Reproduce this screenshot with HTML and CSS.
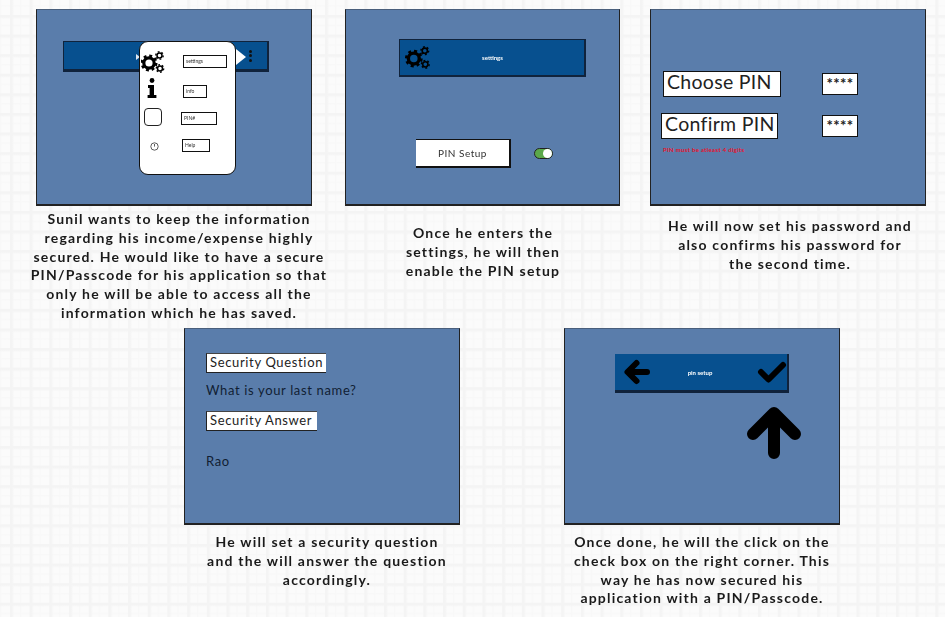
FILE: index.html
```html
<!DOCTYPE html>
<html lang="en">
<head>
    <meta charset="UTF-8">
    <meta name="viewport" content="width=device-width, initial-scale=1.0">
    <title>PIN Setup Storyboard</title>
    <link rel="stylesheet" href="styles.css">
</head>
<body>
    <svg class="defs" width="0" height="0" aria-hidden="true">
        <symbol id="gears" viewBox="0 0 24 22">
            <circle cx="8" cy="12" r="5.2" fill="none" stroke="#000" stroke-width="3.2"/>
            <circle cx="8" cy="12" r="7" fill="none" stroke="#000" stroke-width="3" stroke-dasharray="2.8 2.7"/>
            <circle cx="18.5" cy="4.5" r="2.5" fill="none" stroke="#000" stroke-width="1.5"/>
            <circle cx="18.5" cy="4.5" r="3.7" fill="none" stroke="#000" stroke-width="1.4" stroke-dasharray="1.8 2"/>
            <circle cx="19" cy="17.5" r="2.5" fill="none" stroke="#000" stroke-width="1.5"/>
            <circle cx="19" cy="17.5" r="3.7" fill="none" stroke="#000" stroke-width="1.4" stroke-dasharray="1.8 2"/>
        </symbol>
    </svg>

    <div class="board">
        <div class="row row-top">
            <section class="step">
                <div class="panel panel-menu">
                    <div class="toolbar toolbar-menu">
                        <span class="kebab"><i></i><i></i><i></i></span>
                    </div>
                    <div class="popup">
                        <div class="popup-row">
                            <svg class="gears" width="24" height="22"><use href="#gears"/></svg>
                            <span class="tag tag-settings">settings</span>
                        </div>
                        <div class="popup-row">
                            <svg class="info" width="10" height="20" viewBox="0 0 10 20">
                                <circle cx="5" cy="2.5" r="2.4"/>
                                <path d="M1 7h6v10h2.4v3H.6v-3H2.6v-7H1z"/>
                            </svg>
                            <span class="tag tag-info">info</span>
                        </div>
                        <div class="popup-row">
                            <span class="blank-icon"></span>
                            <span class="tag tag-pin">PIN#</span>
                        </div>
                        <div class="popup-row">
                            <svg class="clock" width="9" height="9" viewBox="0 0 9 9">
                                <circle cx="4.5" cy="4.5" r="3.7" fill="none" stroke="#333" stroke-width=".8"/>
                                <path d="M4.5 2v2.6" stroke="#333" stroke-width=".8"/>
                            </svg>
                            <span class="tag tag-help">Help</span>
                        </div>
                    </div>
                </div>
                <p class="caption caption-one">Sunil wants to keep the information<br>regarding his income/expense highly<br>secured. He would like to have a secure<br>PIN/Passcode for his application so that<br>only he will be able to access all the<br>information which he has saved.</p>
            </section>

            <section class="step">
                <div class="panel panel-settings">
                    <div class="toolbar toolbar-settings">
                        <svg class="gears" width="26" height="23"><use href="#gears"/></svg>
                        <span class="toolbar-title">settings</span>
                    </div>
                    <div class="pin-row">
                        <button class="pin-btn">PIN Setup</button>
                        <span class="toggle"><i></i></span>
                    </div>
                </div>
                <p class="caption caption-two">Once he enters the<br>settings, he will then<br>enable the PIN setup</p>
            </section>

            <section class="step">
                <div class="panel panel-pin">
                    <div class="pin-form">
                        <span class="label-big">Choose PIN</span>
                        <span class="stars">****</span>
                        <span class="label-big label-confirm">Confirm PIN</span>
                        <span class="stars">****</span>
                    </div>
                    <p class="pin-error">PIN must be atleast 4 digits</p>
                </div>
                <p class="caption caption-three">He will now set his password and<br>also confirms his password for<br>the second time.</p>
            </section>
        </div>

        <div class="row row-bottom">
            <section class="step">
                <div class="panel panel-security">
                    <span class="label-small label-question">Security Question</span>
                    <p class="plain">What is your last name?</p>
                    <span class="label-small label-answer">Security Answer</span>
                    <p class="plain plain-answer">Rao</p>
                </div>
                <p class="caption caption-four">He will set a security question<br>and the will answer the question<br>accordingly.</p>
            </section>

            <section class="step">
                <div class="panel panel-done">
                    <div class="toolbar toolbar-done">
                        <svg width="28" height="28" viewBox="0 0 28 28">
                            <path d="M24 14H5M13.5 5 4.5 14l9 9" fill="none" stroke="#000" stroke-width="6" stroke-linecap="round" stroke-linejoin="round"/>
                        </svg>
                        <span class="toolbar-title">pin setup</span>
                        <svg width="30" height="24" viewBox="0 0 30 24">
                            <path d="M4 12l7.5 7.5L26 5" fill="none" stroke="#000" stroke-width="6" stroke-linecap="round" stroke-linejoin="round"/>
                        </svg>
                    </div>
                    <svg class="up-arrow" width="56" height="52" viewBox="0 0 56 52">
                        <path d="M28 46V7M7 27 28 6l21 21" fill="none" stroke="#000" stroke-width="12" stroke-linecap="round" stroke-linejoin="round"/>
                    </svg>
                </div>
                <p class="caption caption-five">Once done, he will the click on the<br>check box on the right corner. This<br>way he has now secured his<br>application with a PIN/Passcode.</p>
            </section>
        </div>
    </div>
</body>
</html>
```

FILE: styles.css
```css
* {
    margin: 0;
    padding: 0;
    box-sizing: border-box;
}

body {
    width: 945px;
    height: 617px;
    overflow: hidden;
    font-family: 'Lato', 'Open Sans', sans-serif;
    color: #222;
    background-color: #fbfbfb;
    background-image:
        linear-gradient(90deg, #f4f4f4 2px, transparent 4px),
        linear-gradient(#f4f4f4 2px, transparent 4px),
        linear-gradient(90deg, #f8f8f8 1px, transparent 2px),
        linear-gradient(#f8f8f8 1px, transparent 2px);
    background-size: 19.7px 19.6px, 19.7px 19.6px, 9.85px 9.8px, 9.85px 9.8px;
    background-position: 10px 0, 0 15px, 10px 0, 0 15px;
}

.defs {
    position: absolute;
}

.board {
    height: 617px;
    padding-top: 9px;
    filter: blur(0.45px);
}

.row {
    display: flex;
}

.row-top {
    height: 319px;
    padding-left: 36px;
    gap: 33px;
}

.row-top .step + .step + .step {
    margin-left: -4px;
}

.row-bottom {
    padding-left: 184px;
    gap: 104px;
}

.step {
    width: 276px;
}

/* panels */

.panel {
    position: relative;
    height: 197px;
    background-color: #5a7dab;
    border: 1px solid #222;
    border-top-color: #4a5f7c;
    border-bottom-width: 2px;
}

.panel-settings {
    width: 275px;
}

.caption {
    width: 300px;
    font-size: 14px;
    line-height: 18.8px;
    font-weight: 700;
    letter-spacing: 1.2px;
    text-align: center;
    white-space: nowrap;
    color: #1a1a1a;
}

.caption-one {
    margin: 4px 0 0 -7px;
}

.caption-two {
    margin: 18px 0 0 -12px;
}

.caption-three {
    margin: 11px 0 0 -10px;
}

.caption-four {
    margin: 8px 0 0 -7px;
}

.caption-five {
    margin: 8px 0 0 -12px;
}

/* toolbars */

.toolbar {
    display: flex;
    align-items: center;
    background-color: #07508f;
    border: 1px solid #10233c;
    border-right-width: 2px;
    border-bottom-width: 2px;
}

.toolbar-title {
    flex: 1;
    color: #fff;
    font-size: 6px;
    font-weight: 700;
    text-align: center;
}

.toolbar-menu {
    position: relative;
    width: 206px;
    height: 31px;
    margin: 31px 0 0 26px;
    justify-content: flex-end;
    padding-right: 15px;
    border-bottom-width: 3px;
}

.toolbar-menu::before {
    content: "";
    position: absolute;
    left: 72px;
    top: 12px;
    border-left: 4px solid #dfe8f2;
    border-top: 3px solid transparent;
    border-bottom: 3px solid transparent;
}

.kebab {
    display: flex;
    flex-direction: column;
    gap: 1.5px;
}

.kebab i {
    width: 3px;
    height: 3px;
    border-radius: 50%;
    background-color: #111;
}

.toolbar-settings {
    width: 187px;
    height: 38px;
    margin: 29px 0 0 53px;
    padding-left: 5px;
}

.toolbar-settings .toolbar-title {
    padding-right: 30px;
}

.toolbar-done {
    width: 174px;
    height: 39px;
    margin: 25px 0 0 50px;
    padding: 0 0 0 8px;
    border-width: 0 2px 3px 0;
}

.toolbar-done .toolbar-title {
    padding-right: 8px;
}

.up-arrow {
    display: block;
    margin: 14px 0 0 181px;
}

/* popup menu over the toolbar in the first panel */

.popup {
    position: absolute;
    left: 102px;
    top: 31px;
    width: 97px;
    height: 134px;
    padding: 5px 0 0 1px;
    display: flex;
    flex-direction: column;
    background-color: #fff;
    border: 1px solid #111;
    border-radius: 9px;
}

.popup::after {
    content: "";
    position: absolute;
    right: -11px;
    top: 7px;
    border-left: 10px solid #fff;
    border-top: 8px solid transparent;
    border-bottom: 8px solid transparent;
}

.popup-row {
    display: grid;
    grid-template-columns: 42px auto;
    align-items: center;
    justify-items: start;
    justify-content: start;
    height: 29px;
}

.popup-row:nth-child(2) {
    height: 30px;
}

.popup-row:nth-child(3) {
    height: 25px;
}

.popup-row:nth-child(4) {
    height: 28px;
}

.tag {
    height: 13px;
    padding-left: 2px;
    border: 1px solid #111;
    font-size: 5px;
    line-height: 11px;
    color: #333;
}

.tag-settings {
    width: 44px;
}

.tag-info {
    width: 24px;
}

.tag-pin {
    width: 36px;
    margin-left: -2px;
}

.tag-help {
    width: 28px;
    margin-left: -1px;
}

.info {
    margin: -6px 0 0 6px;
}

.blank-icon {
    width: 18px;
    height: 18px;
    margin: -3px 0 0 3px;
    border: 1.5px solid #222;
    border-radius: 4px;
}

.clock {
    margin: 3px 0 0 9px;
}

/* settings panel */

.pin-row {
    display: flex;
    align-items: center;
    gap: 23px;
    margin: 62px 0 0 70px;
}

.pin-btn {
    width: 95px;
    height: 29px;
    background-color: #fff;
    border: none;
    border-right: 2px solid #111;
    border-bottom: 2px solid #111;
    border-top: 1px solid #111;
    font-family: inherit;
    font-size: 10px;
    letter-spacing: 0.5px;
    color: #333;
}

.toggle {
    display: flex;
    justify-content: flex-end;
    align-items: center;
    width: 19px;
    height: 11px;
    background-color: #5ba84a;
    border: 1.5px solid #222;
    border-radius: 6px;
}

.toggle i {
    width: 9px;
    height: 9px;
    background-color: #fff;
    border-radius: 50%;
}

/* choose pin panel */

.pin-form {
    display: grid;
    grid-template-columns: 159px auto;
    grid-template-rows: 26px 25px;
    row-gap: 16px;
    align-items: start;
    margin: 61px 0 0 12px;
}

.label-big {
    width: 118px;
    height: 26px;
    background-color: #fff;
    border: 1px solid #111;
    font-size: 19.5px;
    line-height: 20px;
    padding-left: 3px;
    letter-spacing: 0.3px;
    color: #222;
    white-space: nowrap;
}

.label-confirm {
    width: 117px;
    margin-left: -2px;
}

.stars {
    width: 36px;
    height: 22px;
    margin-top: 2px;
    background-color: #fff;
    border: 1px solid #111;
    font-size: 15px;
    font-weight: 700;
    line-height: 18px;
    text-align: center;
    letter-spacing: 0.4px;
    color: #222;
}

.pin-error {
    margin: 8px 0 0 12px;
    font-size: 6px;
    font-weight: 700;
    letter-spacing: 0.3px;
    color: #e8102a;
}

/* security panel */

.panel-security {
    padding: 24px 0 0 21px;
}

.label-small {
    display: block;
    height: 20px;
    background-color: #fff;
    border-left: 1px solid #222;
    border-bottom: 1px solid #222;
    border-top: 1px solid #444;
    font-size: 13px;
    line-height: 17px;
    padding-left: 3px;
    letter-spacing: 0.65px;
    color: #222;
    white-space: nowrap;
}

.label-question {
    width: 120px;
}

.label-answer {
    width: 111px;
}

.plain {
    height: 18px;
    margin-top: 8px;
    margin-bottom: 12px;
    font-size: 13px;
    line-height: 18px;
    letter-spacing: 0.65px;
    color: #111d33;
}

.plain-answer {
    margin-top: 21px;
}
```
